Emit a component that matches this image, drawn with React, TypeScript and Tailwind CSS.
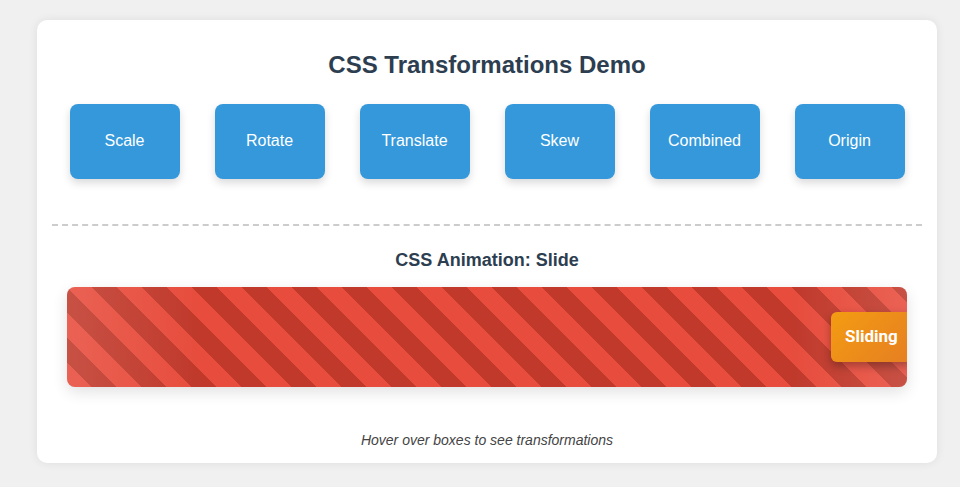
import * as React from "react"

// ── Data ──────────────────────────────────────────────────────
const boxes: string[] = ["Scale", "Rotate", "Translate", "Skew", "Combined", "Origin"]

// ── Component ─────────────────────────────────────────────────
export default function App(): React.JSX.Element {
  return (
    <div className="min-h-[487px] bg-[#f0f0f0] pt-[20px] font-['Liberation_Sans',Arial,sans-serif]">
      <div className="ml-[37px] w-[900px] rounded-[10px] bg-white pt-[31px] pb-[15px] shadow-[0_0_10px_rgba(0,0,0,0.08)]">
        <h1 className="text-center text-[24px] leading-[28px] font-bold text-[#2c3e50]">
          CSS Transformations Demo
        </h1>

        {/* Transform boxes */}
        <div className="mt-[25px] flex justify-center gap-[35px]">
          {boxes.map(
            (b: string): React.JSX.Element => (
              <div
                key={b}
                className="flex h-[75px] w-[110px] items-center justify-center rounded-[8px] bg-[#3498db] pb-[2px] text-[16px] text-white shadow-[0_4px_8px_rgba(0,0,0,0.15)]"
              >
                {b}
              </div>
            )
          )}
        </div>

        <div className="mx-[15px] mt-[45px] border-t-2 border-dashed border-[#ccc]" />

        <h3 className="mt-[24px] text-center text-[18px] leading-[21px] font-bold text-[#2c3e50]">
          CSS Animation: Slide
        </h3>

        {/* Striped track with sliding chip */}
        <div className="relative mx-[30px] mt-[16px] h-[100px] overflow-hidden rounded-[8px] bg-[#e74c3c] bg-[linear-gradient(45deg,#e74c3c_25%,#c0392b_25%,#c0392b_50%,#e74c3c_50%,#e74c3c_75%,#c0392b_75%)] bg-[length:50px_50px] shadow-[0_5px_15px_rgba(0,0,0,0.12)]">
          <div className="absolute inset-0 bg-[linear-gradient(90deg,rgba(255,255,255,0.12)_0%,rgba(255,255,255,0)_16%,rgba(255,255,255,0)_86%,rgba(255,255,255,0.12)_100%)]" />
          <div className="absolute top-1/2 left-[764px] flex h-[50px] -translate-y-1/2 items-center rounded-[6px] bg-[linear-gradient(135deg,#f39c12,#e67e22)] px-[14px] font-['Roboto',sans-serif] text-[17px] font-bold text-white shadow-[0_4px_10px_rgba(0,0,0,0.3)]">
            Sliding
          </div>
        </div>

        <p className="mt-[45px] text-center text-[14px] leading-[16px] text-[#444] italic">
          Hover over boxes to see transformations
        </p>
      </div>
    </div>
  )
}
